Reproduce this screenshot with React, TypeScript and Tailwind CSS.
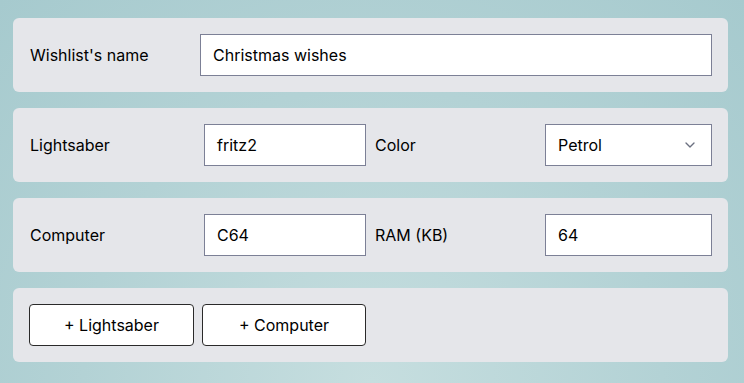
import { ChevronDown } from "lucide-react";

const font = { fontFamily: "Inter, 'Liberation Sans', sans-serif" };

function Card({ children }: { children: React.ReactNode }) {
  return <div className="bg-[#e5e6ea] rounded-md p-4 flex items-center">{children}</div>;
}

function Field({ value, className }: { value: string; className: string }) {
  return (
    <div className={`h-[42px] bg-white border border-[#7c8096] flex items-center px-3 text-[16px] text-black ${className}`}>
      {value}
    </div>
  );
}

export default function App() {
  return (
    <div
      className="w-[744px] h-[383px] overflow-hidden bg-[radial-gradient(ellipse_at_50%_100%,#c6dedf_0%,#b3d2d5_55%,#a6cace_100%)] pl-[13px] pr-4 pt-[18px] flex flex-col gap-4 text-black"
      style={font}
    >
      <Card>
        <div className="w-[171px] pl-px text-[16px]">Wishlist's name</div>
        <Field value="Christmas wishes" className="flex-1" />
      </Card>

      <Card>
        <div className="w-[175px] pl-px text-[16px]">Lightsaber</div>
        <Field value="fritz2" className="w-[162px]" />
        <div className="w-[179px] pl-[9px] text-[16px]">Color</div>
        <div className="h-[42px] flex-1 bg-white border border-[#7c8096] flex items-center justify-between pl-3 pr-[13px] text-[16px]">
          <span>Petrol</span>
          <ChevronDown className="w-4 h-4 text-[#6b7080]" strokeWidth={2} />
        </div>
      </Card>

      <Card>
        <div className="w-[175px] pl-px text-[16px]">Computer</div>
        <Field value="C64" className="w-[162px]" />
        <div className="w-[179px] pl-[9px] text-[16px]">RAM (KB)</div>
        <Field value="64" className="flex-1" />
      </Card>

      <Card>
        <div className="flex gap-2">
          <button className="w-[165px] h-[42px] bg-white border border-[#2a2a2a] rounded-[4px] text-[16px] text-black">
            + Lightsaber
          </button>
          <button className="w-[164px] h-[42px] bg-white border border-[#2a2a2a] rounded-[4px] text-[16px] text-black">
            + Computer
          </button>
        </div>
      </Card>
    </div>
  );
}
